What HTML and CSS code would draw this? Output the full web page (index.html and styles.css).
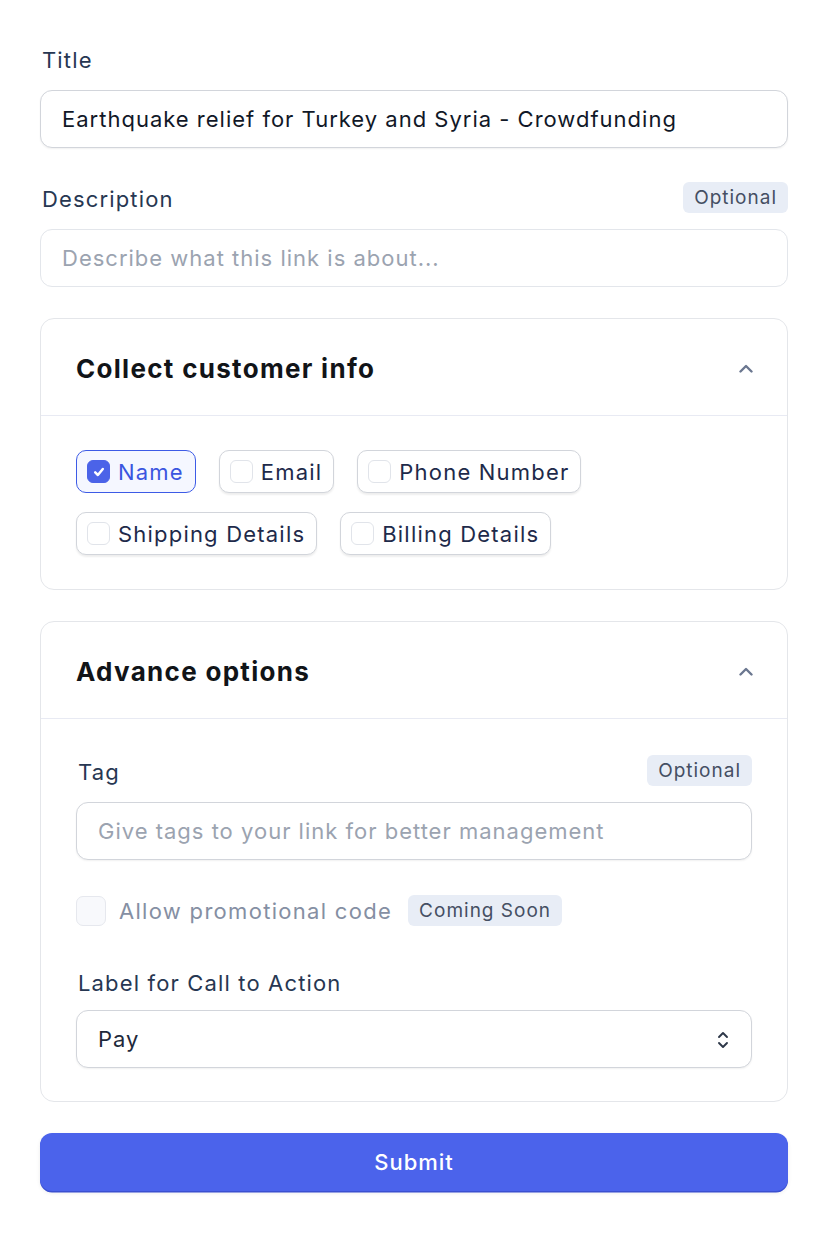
FILE: index.html
```html
<!DOCTYPE html>
<html lang="en">
<head>
<meta charset="utf-8">
<title>Create link</title>
<link rel="stylesheet" href="styles.css">
</head>
<body>
<form class="form">
  <div class="field">
    <div class="label-row"><label class="label">Title</label></div>
    <div class="input input--filled">Earthquake relief for Turkey and Syria - Crowdfunding</div>
  </div>
  <div class="field">
    <div class="label-row"><label class="label">Description</label><span class="badge">Optional</span></div>
    <div class="input input--soft placeholder">Describe what this link is about...</div>
  </div>

  <section class="card">
    <header class="card-head">
      <h2 class="card-title">Collect customer info</h2>
      <svg class="chev" width="14" height="9" viewBox="0 0 14 9"><path d="M1.5 7.5 L7 2 L12.5 7.5" fill="none" stroke="#6b7790" stroke-width="2.4" stroke-linecap="round" stroke-linejoin="round"/></svg>
    </header>
    <div class="card-body chips">
      <span class="chip chip--on"><span class="box box--on"><svg width="14" height="14" viewBox="0 0 14 14"><path d="M3.2 7.4 L5.9 10 L10.8 4" fill="none" stroke="#fff" stroke-width="2.5" stroke-linecap="round" stroke-linejoin="round"/></svg></span>Name</span>
      <span class="chip"><span class="box"></span>Email</span>
      <span class="chip"><span class="box"></span>Phone Number</span>
      <span class="chip"><span class="box"></span>Shipping Details</span>
      <span class="chip"><span class="box"></span>Billing Details</span>
    </div>
  </section>

  <section class="card">
    <header class="card-head">
      <h2 class="card-title">Advance options</h2>
      <svg class="chev" width="14" height="9" viewBox="0 0 14 9"><path d="M1.5 7.5 L7 2 L12.5 7.5" fill="none" stroke="#6b7790" stroke-width="2.4" stroke-linecap="round" stroke-linejoin="round"/></svg>
    </header>
    <div class="card-body adv">
      <div class="field">
        <div class="label-row"><label class="label">Tag</label><span class="badge">Optional</span></div>
        <div class="input input--filled placeholder">Give tags to your link for better management</div>
      </div>
      <div class="promo">
        <span class="box box--lg"></span>
        <span class="promo-text">Allow promotional code</span>
        <span class="badge">Coming Soon</span>
      </div>
      <div class="field field--cta">
        <div class="label-row label-row--short"><label class="label">Label for Call to Action</label></div>
        <div class="input input--filled select">
          <span>Pay</span>
          <svg width="12" height="18" viewBox="0 0 12 18"><path d="M2 6 L6 2 L10 6 M2 12 L6 16 L10 12" fill="none" stroke="#2d3748" stroke-width="1.9" stroke-linecap="round" stroke-linejoin="round"/></svg>
        </div>
      </div>
    </div>
  </section>

  <button type="button" class="submit">Submit</button>
</form>
</body>
</html>
```

FILE: styles.css
```css
* { box-sizing: border-box; }
html, body { margin: 0; background: #fff; }
body {
  font-family: Inter, "Noto Sans", "Liberation Sans", sans-serif;
  color: #1e293b;
  letter-spacing: 1px;
  padding: 40px 40px 40px 40px;
}
.form {
  display: flex;
  flex-direction: column;
  gap: 31px;
}
.field { display: flex; flex-direction: column; }
.label-row {
  height: 36px;
  display: flex;
  align-items: center;
  justify-content: space-between;
  margin-bottom: 14px;
}
.label-row--short { height: 32px; margin-bottom: 13px; }
.label {
  font-size: 22px;
  color: #273752;
  letter-spacing: 1.15px;
  padding-left: 2px;
  padding-top: 3px;
}
.badge {
  display: inline-flex;
  align-items: center;
  height: 31px;
  padding: 0 11px 0 11px;
  border-radius: 6px;
  background: #e8edf6;
  color: #454f63;
  font-size: 19px;
}
.input {
  height: 58px;
  border-radius: 12px;
  display: flex;
  align-items: center;
  padding: 0 21px;
  font-size: 22px;
  color: #111827;
  background: #fff;
}
.input--filled {
  border: 1.5px solid #d2d5db;
  box-shadow: 0 1px 2px rgba(0,0,0,0.06);
}
.input--soft {
  border: 1.5px solid #e3e6eb;
}
.placeholder { color: #9ba3b0; }
.card {
  border: 1.5px solid #e4e6ea;
  border-radius: 14px;
}
.card-head {
  height: 97px;
  display: flex;
  align-items: center;
  justify-content: space-between;
  padding: 0 34px 0 35px;
  border-bottom: 1.5px solid #e8eaf3;
}
.card-title {
  margin: 0;
  font-size: 26px;
  font-weight: 700;
  letter-spacing: 1.3px;
  color: #111418;
  padding-top: 3px;
}
.chev { margin-top: 2px; }
.card-body { padding: 34px 35px 34px 35px; }
.chips {
  display: flex;
  flex-wrap: wrap;
  gap: 19px 23px;
}
.chip {
  display: inline-flex;
  align-items: center;
  gap: 8px;
  height: 43px;
  padding: 0 11px 0 10px;
  border: 1.5px solid #d2d5db;
  border-radius: 10px;
  font-size: 22px;
  letter-spacing: 1.2px;
  color: #1e2a4a;
  box-shadow: 0 1.5px 2px rgba(0,0,0,0.07);
  background: #fff;
}
.chip--on {
  border-color: #3d5be6;
  background: #f5f7ff;
  color: #3a55e0;
  box-shadow: none;
}
.box {
  width: 23px;
  height: 23px;
  border-radius: 6px;
  border: 1.5px solid #e1e4ea;
  background: #fff;
  display: inline-flex;
  align-items: center;
  justify-content: center;
  flex: none;
}
.box--on {
  background: #4b63e8;
  border-color: #4b63e8;
}
.box--lg {
  width: 30px;
  height: 30px;
  border-radius: 7px;
  background: #f8f9fc;
  border-color: #e6e8ee;
}
.adv { padding-top: 33px; padding-bottom: 33px; }
.promo {
  display: flex;
  align-items: center;
  margin-top: 35px;
  height: 31px;
}
.promo-text {
  margin-left: 13px;
  margin-right: 16px;
  font-size: 22px;
  letter-spacing: 1.3px;
  color: #858fa3;
}
.field--cta { margin-top: 39px; }
.select { justify-content: space-between; padding-right: 22px; color: #1e293b; }
.select svg { margin-top: 1px; }
.submit {
  height: 58px;
  border: none;
  border-radius: 12px;
  background: #4b63eb;
  color: #fff;
  font-family: inherit;
  font-size: 22px;
  font-weight: 500;
  letter-spacing: 1px;
  box-shadow: 0 1.5px 0 #3a4fd0, 0 2px 4px rgba(0,0,0,0.08);
  cursor: pointer;
}
```
